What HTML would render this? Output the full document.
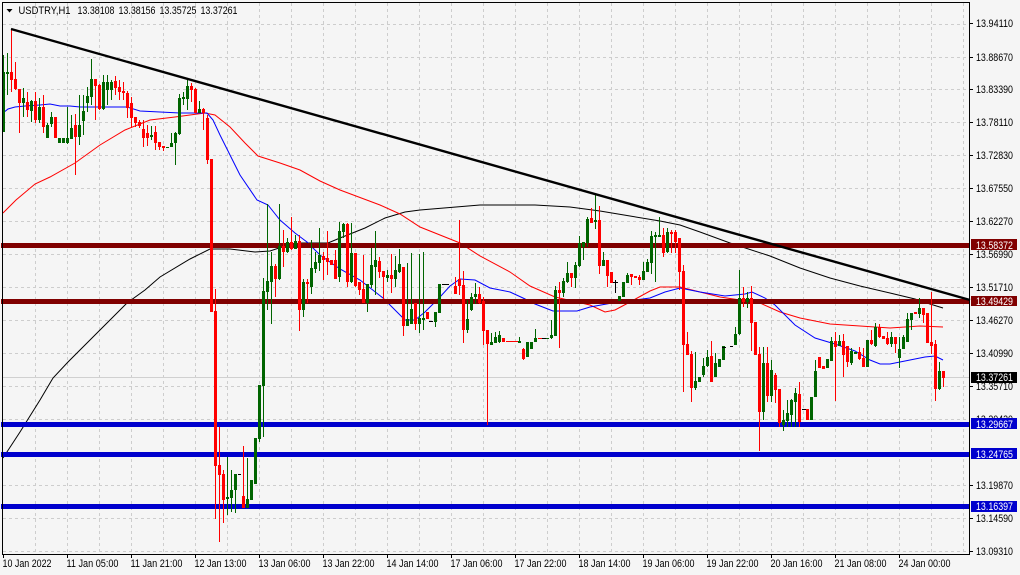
<!DOCTYPE html>
<html><head><meta charset="utf-8"><style>
html,body{margin:0;padding:0;background:#f5f5f5;width:1020px;height:575px;overflow:hidden}
svg{display:block}
text{font-family:"Liberation Sans",sans-serif;font-size:11px;fill:#000}
.l text{fill:#fff}
</style></head><body>
<svg width="1020" height="575" viewBox="0 0 1020 575" xmlns="http://www.w3.org/2000/svg">
<rect width="1020" height="575" fill="#f5f5f5"/>
<g stroke="#cdcdcd" stroke-width="1" stroke-dasharray="3 3" fill="none" shape-rendering="crispEdges">
<path d="M3 24.5H969M3 57.5H969M3 89.5H969M3 122.5H969M3 155.5H969M3 188.5H969M3 221.5H969M3 254.5H969M3 287.5H969M3 320.5H969M3 353.5H969M3 386.5H969M3 419.5H969M3 452.5H969M3 485.5H969M3 518.5H969M3 551.5H969"/>
<path d="M35.5 3V554M67.5 3V554M99.5 3V554M131.5 3V554M163.5 3V554M195.5 3V554M227.5 3V554M259.5 3V554M291.5 3V554M323.5 3V554M355.5 3V554M387.5 3V554M419.5 3V554M451.5 3V554M483.5 3V554M515.5 3V554M547.5 3V554M579.5 3V554M611.5 3V554M643.5 3V554M675.5 3V554M707.5 3V554M739.5 3V554M771.5 3V554M803.5 3V554M835.5 3V554M867.5 3V554M899.5 3V554M931.5 3V554M963.5 3V554"/>
</g>
<path d="M3 377.5H969" stroke="#d0d0d0" stroke-width="1" shape-rendering="crispEdges"/>
<g fill="none" stroke-width="1">
<polyline stroke="#000" points="3,458 20,432 40,400 53,378 68,362 98,332 127,303 145,290 160,277 190,259 210,249 230,249 255,252 270,251 285,246 300,243 328,243 340,238 365,228 385,218 405,212 420,210 480,205 535,205 570,207 600,211 630,216 660,221 680,225 700,232 730,243 770,256 800,268 830,278 860,286 890,293 915,299 930,304 943,308"/>
<polyline stroke="#f00" points="3,213 16,200 35,184 50,177 75,163 100,145 125,130 150,120 175,117 205,113 215,115 230,127 245,143 258,156 280,163 300,170 320,181 340,190 380,205 400,214 420,227 460,243 480,256 510,272 530,286 555,297 590,305 605,312 615,310 630,302 650,291 660,287 680,287 700,292 720,297 760,303 780,312 800,318 830,324 860,326 890,328 920,326 943,327"/>
<polyline stroke="#00f" points="3,113 8,109 15,107 25,106 40,105 50,104 60,106 70,106 80,107 100,107 127,107 140,111 160,112 180,113 207,113 213,120 220,135 230,155 240,175 257,200 268,205 280,220 295,233 307,242 320,255 340,269 360,280 383,298 395,310 405,320 415,320 425,312 440,297 450,286 460,279 475,280 490,288 510,292 523,298 535,304 553,311 577,311 590,307 612,303 650,298 665,292 680,288 700,292 725,296 745,294 752,292 765,298 775,305 795,325 815,338 835,344 855,351 870,360 880,364 890,364 905,361 925,357 935,356 943,360"/>
</g>
<g shape-rendering="crispEdges" stroke-width="5">
<path stroke="#800000" d="M1 245.5H970M1 301.5H970"/>
<path stroke="#0000cd" d="M1 424.5H970M1 454.5H970M1 506.5H970"/>
</g>
<g fill="none" shape-rendering="crispEdges">
<path stroke="#006400" stroke-width="1" d="M3.5 55V132M7.5 53V95M23.5 88V117M31.5 100V122M39.5 98V123M47.5 123V138M51.5 112V127M67.5 107V144M71.5 115V139M79.5 95V145M83.5 95V135M87.5 87V112M91.5 59V105M103.5 75V110M107.5 75V105M111.5 80V100M151.5 126V140M171.5 133V147M175.5 132V165M179.5 94V135M183.5 92V105M187.5 80V110M199.5 101V113M227.5 457V515M231.5 470V512M235.5 474V513M247.5 458V508M251.5 480V500M255.5 438V484M259.5 385V442M263.5 278V437M267.5 204V310M271.5 252V324M279.5 204V280M287.5 238V253M295.5 235V249M303.5 279V317M311.5 240V294M315.5 252V273M319.5 228V271M339.5 222V282M343.5 223V238M351.5 223V283M367.5 284V312M371.5 248V288M375.5 231V295M387.5 270V282M395.5 256V287M399.5 249V273M407.5 263V326M411.5 253V324M419.5 254V333M423.5 252V330M435.5 312V327M439.5 284V313M467.5 300V333M471.5 293V311M475.5 283V304M491.5 333V345M495.5 332V343M499.5 331V343M519.5 337V343M527.5 342V357M531.5 342V349M535.5 329V342M551.5 320V339M555.5 286V336M563.5 278V297M567.5 262V283M575.5 262V288M579.5 236V267M583.5 242V260M587.5 217V247M595.5 194V229M603.5 252V266M619.5 296V301M623.5 282V297M627.5 273V283M643.5 262V280M647.5 259V272M651.5 231V274M655.5 232V282M659.5 217V237M667.5 228V253M695.5 352V390M699.5 377V382M703.5 358V377M707.5 350V367M715.5 353V377M719.5 359V367M723.5 346V360M735.5 327V345M739.5 270V335M747.5 292V308M763.5 347V420M771.5 360V402M783.5 410V431M787.5 400V427M791.5 399V427M795.5 388V427M811.5 397V420M815.5 360V397M827.5 359V368M831.5 337V361M839.5 335V346M851.5 348V365M867.5 340V367M875.5 323V347M891.5 332V347M899.5 337V368M903.5 335V349M907.5 313V342M911.5 313V330M919.5 298V318M939.5 362V390"/>
<path stroke="#006400" stroke-width="3" d="M3.5 72V132M7.5 72V74M23.5 98V103M31.5 101V111M39.5 107V120M47.5 125V138M51.5 117V124M59.5 138V143M63.5 138V143M67.5 138V143M71.5 128V139M79.5 125V137M83.5 111V121M87.5 96V103M91.5 79V97M103.5 82V109M107.5 82V90M111.5 82V90M151.5 135V137M167.5 147V148M171.5 143V147M175.5 133V143M179.5 98V134M183.5 97V99M187.5 86V99M199.5 109V113M227.5 497V499M231.5 490V498M235.5 474V490M247.5 499V508M251.5 480V500M255.5 438V484M259.5 385V439M263.5 291V386M267.5 281V292M271.5 266V282M279.5 246V279M287.5 242V252M295.5 241V249M303.5 282V310M311.5 268V287M315.5 262V269M319.5 255V263M339.5 231V277M343.5 224V232M351.5 253V282M367.5 284V303M371.5 265V285M375.5 260V267M387.5 275V278M395.5 270V279M399.5 264V272M407.5 319V326M411.5 309V324M419.5 318V324M423.5 318V320M435.5 312V322M439.5 284V313M467.5 319V330M471.5 297V310M475.5 294V297M491.5 342V345M495.5 337V343M499.5 335V342M519.5 341V343M527.5 342V357M531.5 342V349M535.5 338V342M547.5 338V339M551.5 335V338M555.5 290V336M563.5 281V293M567.5 273V282M575.5 265V278M579.5 243V266M583.5 242V247M587.5 219V243M595.5 220V222M603.5 260V266M619.5 296V301M623.5 282V297M627.5 275V283M643.5 271V280M647.5 262V272M651.5 236V263M655.5 235V237M659.5 235V237M667.5 232V252M695.5 381V388M699.5 377V382M703.5 366V375M707.5 357V366M715.5 363V377M719.5 359V367M723.5 346V360M735.5 334V345M739.5 298V334M747.5 298V302M763.5 363V412M771.5 370V396M783.5 420V425M787.5 413V421M791.5 400V415M795.5 393V402M811.5 397V420M815.5 371V397M827.5 359V368M831.5 341V361M839.5 341V346M851.5 351V363M855.5 352V354M867.5 340V367M875.5 327V346M891.5 337V344M899.5 349V358M903.5 337V349M907.5 319V342M911.5 313V320M919.5 308V314M939.5 371V389"/>
<path stroke="#f00" stroke-width="1" d="M11.5 29V92M15.5 62V90M19.5 89V133M27.5 92V117M35.5 92V123M43.5 95V133M55.5 117V138M75.5 114V175M95.5 79V120M99.5 84V110M115.5 76V95M119.5 80V100M123.5 82V100M127.5 91V118M131.5 97V128M135.5 117V127M139.5 120V128M143.5 120V147M147.5 125V146M155.5 126V150M159.5 142V150M163.5 146V151M191.5 83V102M195.5 88V113M203.5 108V130M207.5 115V164M211.5 159V312M215.5 289V519M219.5 427V542M223.5 470V523M243.5 446V508M275.5 264V297M283.5 230V267M291.5 217V250M299.5 235V331M307.5 279V303M323.5 252V280M327.5 231V275M331.5 260V265M335.5 250V279M347.5 223V287M355.5 253V287M359.5 282V295M363.5 255V303M379.5 257V278M383.5 271V299M391.5 254V293M403.5 267V336M415.5 303V330M455.5 277V294M459.5 220V295M463.5 271V343M479.5 287V304M483.5 297V345M487.5 330V425M523.5 348V360M559.5 282V348M571.5 273V287M591.5 208V223M599.5 206V274M607.5 260V287M611.5 272V283M631.5 274V285M639.5 275V285M663.5 228V257M671.5 230V253M675.5 230V253M679.5 238V290M683.5 265V392M687.5 332V355M691.5 351V402M711.5 341V382M743.5 287V307M751.5 286V351M755.5 322V355M759.5 347V451M767.5 347V402M775.5 373V403M779.5 389V427M799.5 382V427M807.5 409V420M819.5 357V368M823.5 366V369M835.5 332V401M843.5 334V377M847.5 346V367M859.5 347V360M863.5 348V367M871.5 330V345M879.5 324V338M883.5 336V339M887.5 332V345M895.5 337V353M923.5 308V323M927.5 313V343M931.5 292V354M935.5 340V401M943.5 371V387"/>
<path stroke="#f00" stroke-width="3" d="M11.5 72V80M15.5 79V89M19.5 89V103M27.5 102V110M35.5 101V120M43.5 107V127M55.5 117V138M75.5 125V137M95.5 79V86M99.5 85V109M115.5 81V88M119.5 87V92M123.5 91V93M127.5 93V108M131.5 103V118M135.5 117V123M139.5 122V126M143.5 129V138M147.5 133V138M155.5 132V143M159.5 142V147M163.5 146V148M191.5 86V90M195.5 89V113M203.5 109V113M207.5 118V160M211.5 159V312M215.5 311V466M219.5 465V475M223.5 474V500M243.5 496V508M275.5 266V279M283.5 246V252M291.5 242V249M299.5 241V310M307.5 282V284M323.5 256V260M327.5 258V262M331.5 260V265M335.5 260V279M347.5 224V282M355.5 253V286M359.5 282V290M363.5 289V303M379.5 261V272M383.5 271V277M391.5 275V279M403.5 267V326M415.5 303V324M427.5 312V319M455.5 286V294M459.5 279V286M463.5 285V330M479.5 294V303M483.5 301V331M487.5 330V344M503.5 338V342M507.5 341V342M523.5 349V359M559.5 290V293M571.5 273V278M591.5 218V223M599.5 220V266M607.5 260V276M611.5 272V283M631.5 274V277M635.5 276V278M639.5 277V280M663.5 235V253M671.5 232V234M675.5 232V242M679.5 238V272M683.5 271V345M687.5 344V355M691.5 354V388M711.5 356V382M743.5 298V302M751.5 298V323M755.5 322V355M759.5 354V412M767.5 363V396M775.5 375V390M779.5 389V423M799.5 394V422M807.5 409V420M819.5 357V368M823.5 366V369M835.5 341V347M843.5 341V355M847.5 346V362M859.5 352V359M863.5 358V367M871.5 340V344M879.5 327V337M883.5 336V339M887.5 338V344M895.5 337V344M915.5 312V314M923.5 308V315M927.5 313V343M931.5 342V346M935.5 344V389M943.5 371V378"/>
<path stroke="#f00" stroke-width="1" d="M509 341.5H518M538 338.5H542"/>
<path stroke="#000" stroke-width="1" d="M238 474.5H241M429 321.5H433M442 284.5H449M613 282.5H618M615.5 280V293M722 347.5H726M730 346.5H733M802 409.5H806M542 338.5H546"/>
</g>
<path d="M11 29L970 300" stroke="#000" stroke-width="2.4" fill="none"/>
<path d="M2.5 2.5V554.5H969.5V2.5Z" fill="none" stroke="#000" stroke-width="1" shape-rendering="crispEdges"/>
<path d="M970 23.5h3M970 57.5h3M970 89.5h3M970 122.5h3M970 155.5h3M970 188.5h3M970 221.5h3M970 254.5h3M970 287.5h3M970 320.5h3M970 353.5h3M970 386.5h3M970 485.5h3M970 518.5h3M970 551.5h3M3.5 555v3M67.5 555v3M131.5 555v3M195.5 555v3M259.5 555v3M323.5 555v3M387.5 555v3M451.5 555v3M515.5 555v3M579.5 555v3M643.5 555v3M707.5 555v3M771.5 555v3M835.5 555v3M899.5 555v3" stroke="#000" stroke-width="1" fill="none" shape-rendering="crispEdges"/>
<path d="M6.5 9H12.5L9.5 12.5Z" fill="#000"/>
<text x="18.5" y="14" textLength="52" lengthAdjust="spacingAndGlyphs">USDTRY,H1</text>
<text x="77.5" y="14" textLength="37" lengthAdjust="spacingAndGlyphs">13.38108</text>
<text x="118.5" y="14" textLength="37" lengthAdjust="spacingAndGlyphs">13.38156</text>
<text x="159.5" y="14" textLength="37" lengthAdjust="spacingAndGlyphs">13.35725</text>
<text x="200.5" y="14" textLength="37" lengthAdjust="spacingAndGlyphs">13.37261</text>
<g>
<text x="976" y="27" textLength="37" lengthAdjust="spacingAndGlyphs">13.94110</text>
<text x="976" y="61" textLength="37" lengthAdjust="spacingAndGlyphs">13.88670</text>
<text x="976" y="93" textLength="37" lengthAdjust="spacingAndGlyphs">13.83390</text>
<text x="976" y="126" textLength="37" lengthAdjust="spacingAndGlyphs">13.78110</text>
<text x="976" y="159" textLength="37" lengthAdjust="spacingAndGlyphs">13.72830</text>
<text x="976" y="192" textLength="37" lengthAdjust="spacingAndGlyphs">13.67550</text>
<text x="976" y="225" textLength="37" lengthAdjust="spacingAndGlyphs">13.62270</text>
<text x="976" y="258" textLength="37" lengthAdjust="spacingAndGlyphs">13.56990</text>
<text x="976" y="291" textLength="37" lengthAdjust="spacingAndGlyphs">13.51710</text>
<text x="976" y="324" textLength="37" lengthAdjust="spacingAndGlyphs">13.46270</text>
<text x="976" y="357" textLength="37" lengthAdjust="spacingAndGlyphs">13.40990</text>
<text x="976" y="390" textLength="37" lengthAdjust="spacingAndGlyphs">13.35710</text>
<text x="976" y="423" textLength="37" lengthAdjust="spacingAndGlyphs">13.30430</text>
<text x="976" y="489" textLength="37" lengthAdjust="spacingAndGlyphs">13.19870</text>
<text x="976" y="522" textLength="37" lengthAdjust="spacingAndGlyphs">13.14590</text>
<text x="976" y="555" textLength="37" lengthAdjust="spacingAndGlyphs">13.09310</text>
</g>
<g shape-rendering="crispEdges">
<rect x="971" y="239" width="46" height="11" fill="#800000"/>
<rect x="971" y="296" width="46" height="10" fill="#800000"/>
<rect x="971" y="372" width="46" height="11" fill="#000"/>
<rect x="971" y="418" width="46" height="11" fill="#0000cd"/>
<rect x="971" y="448" width="46" height="11" fill="#0000cd"/>
<rect x="971" y="501" width="46" height="11" fill="#0000cd"/>
</g>
<g class="l">
<text x="976" y="249" textLength="37" lengthAdjust="spacingAndGlyphs">13.58372</text>
<text x="976" y="305" textLength="37" lengthAdjust="spacingAndGlyphs">13.49429</text>
<text x="976" y="381" textLength="37" lengthAdjust="spacingAndGlyphs">13.37261</text>
<text x="976" y="428" textLength="37" lengthAdjust="spacingAndGlyphs">13.29667</text>
<text x="976" y="458" textLength="37" lengthAdjust="spacingAndGlyphs">13.24765</text>
<text x="976" y="510" textLength="37" lengthAdjust="spacingAndGlyphs">13.16397</text>
</g>
<g>
<text x="2.5" y="567" textLength="49" lengthAdjust="spacingAndGlyphs">10 Jan 2022</text>
<text x="66.5" y="567" textLength="52" lengthAdjust="spacingAndGlyphs">11 Jan 05:00</text>
<text x="130.5" y="567" textLength="52" lengthAdjust="spacingAndGlyphs">11 Jan 21:00</text>
<text x="194.5" y="567" textLength="52" lengthAdjust="spacingAndGlyphs">12 Jan 13:00</text>
<text x="258.5" y="567" textLength="52" lengthAdjust="spacingAndGlyphs">13 Jan 06:00</text>
<text x="322.5" y="567" textLength="52" lengthAdjust="spacingAndGlyphs">13 Jan 22:00</text>
<text x="386.5" y="567" textLength="52" lengthAdjust="spacingAndGlyphs">14 Jan 14:00</text>
<text x="450.5" y="567" textLength="52" lengthAdjust="spacingAndGlyphs">17 Jan 06:00</text>
<text x="514.5" y="567" textLength="52" lengthAdjust="spacingAndGlyphs">17 Jan 22:00</text>
<text x="578.5" y="567" textLength="52" lengthAdjust="spacingAndGlyphs">18 Jan 14:00</text>
<text x="642.5" y="567" textLength="52" lengthAdjust="spacingAndGlyphs">19 Jan 06:00</text>
<text x="706.5" y="567" textLength="52" lengthAdjust="spacingAndGlyphs">19 Jan 22:00</text>
<text x="770.5" y="567" textLength="52" lengthAdjust="spacingAndGlyphs">20 Jan 16:00</text>
<text x="834.5" y="567" textLength="52" lengthAdjust="spacingAndGlyphs">21 Jan 08:00</text>
<text x="898.5" y="567" textLength="52" lengthAdjust="spacingAndGlyphs">24 Jan 00:00</text>
</g>
</svg>
</body></html>
